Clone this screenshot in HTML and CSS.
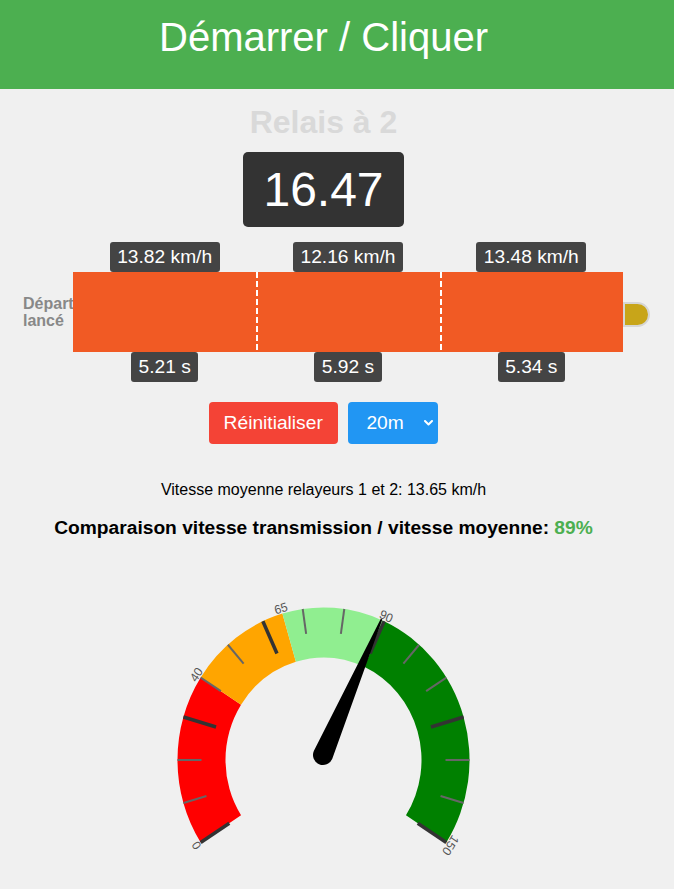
FILE: index.html
```html
<!DOCTYPE html>
<html lang="fr">
<head>
<meta charset="utf-8">
<title>Relais à 2</title>
<link rel="stylesheet" href="styles.css">
</head>
<body>
<header class="topbar">
  <h1 class="title">Démarrer / Cliquer</h1>
</header>
<main class="main">
  <h2 class="relay-title">Relais à 2</h2>
  <div class="timer">16.47</div>

  <section class="relay-row">
    <div class="start-label">Départ<br>lancé</div>
    <div class="track">
      <div class="seg">
        <span class="chip">13.82 km/h</span>
        <div class="bar"></div>
        <span class="chip">5.21 s</span>
      </div>
      <div class="seg">
        <span class="chip">12.16 km/h</span>
        <div class="bar bar-split"></div>
        <span class="chip">5.92 s</span>
      </div>
      <div class="seg">
        <span class="chip">13.48 km/h</span>
        <div class="bar bar-split"></div>
        <span class="chip">5.34 s</span>
      </div>
    </div>
    <div class="knob"></div>
  </section>

  <div class="controls">
    <button class="btn-reset" type="button">Réinitialiser</button>
    <div class="select">
      <span class="select-value">20m</span>
      <svg class="chevron" width="9" height="6" viewBox="0 0 9 6"><polyline points="1,1 4.5,4.5 8,1" fill="none" stroke="#fff" stroke-width="2" stroke-linecap="round" stroke-linejoin="round"/></svg>
    </div>
  </div>

  <p class="avg">Vitesse moyenne relayeurs 1 et 2: 13.65 km/h</p>
  <p class="compare">Comparaison vitesse transmission / vitesse moyenne: <span class="pct">89%</span></p>

  <svg class="gauge" width="647" height="340" viewBox="0 0 647 340">
    <g transform="translate(323.5 221) scale(1 1.045)">
      <path fill="#ff0000" d="M -122.83 78.93 A 146 146 0 0 1 -122.83 -78.93 L -82.45 -52.98 A 98 98 0 0 0 -82.45 52.98 Z"/>
      <path fill="#ffa500" d="M -122.83 -78.93 A 146 146 0 0 1 -41.13 -140.09 L -27.61 -94.03 A 98 98 0 0 0 -82.45 -52.98 Z"/>
      <path fill="#90ee90" d="M -41.13 -140.09 A 146 146 0 0 1 60.65 -132.82 L 40.71 -89.15 A 98 98 0 0 0 -27.61 -94.03 Z"/>
      <path fill="#008000" d="M 60.65 -132.82 A 146 146 0 0 1 122.83 78.93 L 82.45 52.98 A 98 98 0 0 0 40.71 -89.15 Z"/>

      <g class="tick-major">
        <line x1="0" y1="-146" x2="0" y2="-112" transform="rotate(-122.727)"/>
        <line x1="0" y1="-146" x2="0" y2="-112" transform="rotate(-73.636)"/>
        <line x1="0" y1="-146" x2="0" y2="-112" transform="rotate(-24.545)"/>
        <line x1="0" y1="-146" x2="0" y2="-112" transform="rotate(24.545)"/>
        <line x1="0" y1="-146" x2="0" y2="-112" transform="rotate(73.636)"/>
        <line x1="0" y1="-146" x2="0" y2="-112" transform="rotate(122.727)"/>
      </g>
      <g class="tick-minor">
        <line x1="0" y1="-146" x2="0" y2="-122" transform="rotate(-106.364)"/>
        <line x1="0" y1="-146" x2="0" y2="-122" transform="rotate(-90)"/>
        <line x1="0" y1="-146" x2="0" y2="-122" transform="rotate(-57.273)"/>
        <line x1="0" y1="-146" x2="0" y2="-122" transform="rotate(-40.909)"/>
        <line x1="0" y1="-146" x2="0" y2="-122" transform="rotate(-8.182)"/>
        <line x1="0" y1="-146" x2="0" y2="-122" transform="rotate(8.182)"/>
        <line x1="0" y1="-146" x2="0" y2="-122" transform="rotate(40.909)"/>
        <line x1="0" y1="-146" x2="0" y2="-122" transform="rotate(57.273)"/>
        <line x1="0" y1="-146" x2="0" y2="-122" transform="rotate(90)"/>
        <line x1="0" y1="-146" x2="0" y2="-122" transform="rotate(106.364)"/>
      </g>
      <g class="gauge-label">
        <text transform="rotate(-122.727) translate(0 -147)">0</text>
        <text transform="rotate(-57.273) translate(0 -147)">40</text>
        <text transform="rotate(-16.364) translate(0 -147)">65</text>
        <text transform="rotate(24.545) translate(0 -147)">90</text>
        <text transform="rotate(122.727) translate(0 -147)">150</text>
      </g>
    </g>
    <g transform="translate(323 216) rotate(23.3)">
      <path fill="#000" d="M -10 0 L -0.8 -148 L 0.8 -148 L 10 0 A 10 10 0 0 1 -10 0 Z"/>
    </g>
  </svg>
</main>
</body>
</html>
```

FILE: styles.css
```css
* {
  box-sizing: border-box;
}

html, body {
  margin: 0;
  padding: 0;
}

body {
  background: #f0f0f0;
  font-family: "Liberation Sans", Arial, sans-serif;
  color: #000;
  width: 674px;
  height: 889px;
  overflow: hidden;
}

.topbar {
  background: #4caf50;
  height: 89px;
}

.title {
  width: 647px;
  margin: 0;
  text-align: center;
  color: #fff;
  font-size: 40px;
  font-weight: normal;
  line-height: 75px;
}

.main {
  width: 647px;
}

.relay-title {
  margin: 15px 0 0;
  text-align: center;
  font-size: 32px;
  font-weight: bold;
  line-height: 37px;
  color: #d9d9d9;
}

.timer {
  width: fit-content;
  margin: 11px auto 0;
  padding: 10px 20px;
  background: #333;
  color: #fff;
  border-radius: 5px;
  font-size: 48px;
  line-height: 55px;
}

.relay-row {
  display: flex;
  align-items: center;
  margin: 15px 0 0 23px;
}

.start-label {
  width: 50px;
  flex: none;
  color: #888;
  font-weight: bold;
  font-size: 16px;
  line-height: 17px;
  white-space: nowrap;
}

.track {
  width: 550px;
  flex: none;
  display: grid;
  grid-template-columns: repeat(3, 1fr);
  position: relative;
}

.seg {
  display: flex;
  flex-direction: column;
  align-items: center;
}

.chip {
  height: 30px;
  line-height: 30px;
  padding: 0 7.5px;
  background: #444;
  color: #fff;
  border-radius: 3px;
  font-size: 19.2px;
  white-space: nowrap;
}

.bar {
  align-self: stretch;
  height: 80px;
  background-color: #f15a24;
}

.bar-split {
  background-image: repeating-linear-gradient(to bottom, #fff 0 6px, transparent 6px 9px);
  background-size: 2px 100%;
  background-repeat: no-repeat;
  background-position: left top;
}

.knob {
  flex: none;
  width: 27px;
  height: 25px;
  margin-top: 4px;
  background: #c8a519;
  border: 2px solid #d6d6d6;
  border-radius: 0 13px 13px 0;
}

.controls {
  display: flex;
  justify-content: center;
  gap: 10.6px;
  margin-top: 20px;
}

.btn-reset {
  height: 42px;
  padding: 0 15px;
  border: none;
  border-radius: 4px;
  background: #f44336;
  color: #fff;
  font-family: inherit;
  font-size: 19.2px;
  line-height: 42px;
}

.select {
  width: 90px;
  height: 42px;
  display: flex;
  align-items: center;
  padding: 0 5px 0 18px;
  border-radius: 4px;
  background: #2196f3;
  color: #fff;
  font-size: 19.2px;
}

.chevron {
  margin-left: auto;
  display: block;
}

.avg {
  margin: 37px 0 0;
  text-align: center;
  font-size: 16px;
  line-height: 18px;
}

.compare {
  margin: 18px 0 0;
  text-align: center;
  font-size: 19.2px;
  font-weight: bold;
  line-height: 22px;
}

.pct {
  color: #4caf50;
}

.gauge {
  display: block;
}

.tick-major line {
  stroke: #333;
  stroke-width: 3.5;
}

.tick-minor line {
  stroke: #666;
  stroke-width: 2;
}

.gauge-label text {
  font-family: "Liberation Sans", Arial, sans-serif;
  font-size: 12px;
  fill: #555;
  text-anchor: middle;
}
```
